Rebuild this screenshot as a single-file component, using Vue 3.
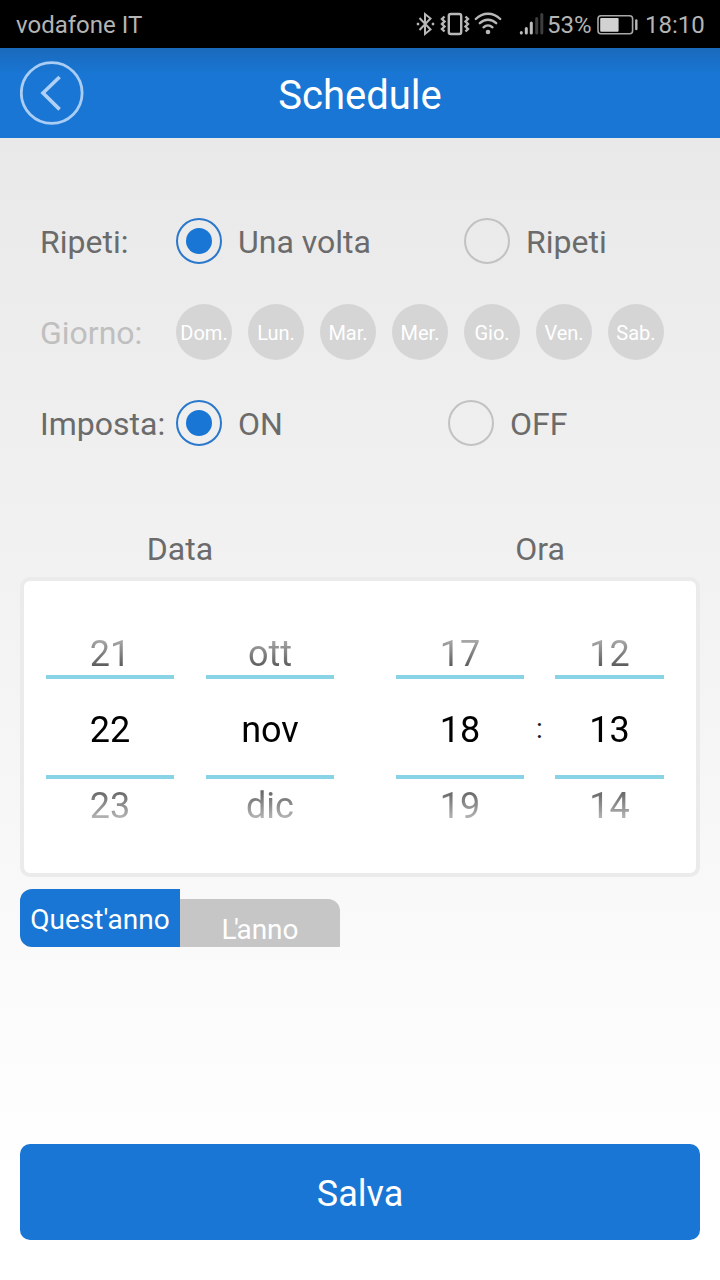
<script setup>
import { ref } from 'vue';

const repeat = ref('once');
const power = ref('on');
const year = ref('this');

const days = ['Dom.', 'Lun.', 'Mar.', 'Mer.', 'Gio.', 'Ven.', 'Sab.'];

const dateWheels = [
	{ name: 'day', items: ['21', '22', '23'] },
	{ name: 'month', items: ['ott', 'nov', 'dic'] },
];

const timeWheels = [
	{ name: 'hour', items: ['17', '18', '19'] },
	{ name: 'minute', items: ['12', '13', '14'] },
];
</script>

<template>
	<div class="screen">
		<div class="status-bar">
			<span class="carrier">vodafone IT</span>
			<svg class="status-icons" width="131" height="48" viewBox="0 0 131 48" fill="none" stroke="#b8b8b8">
				<!-- bluetooth -->
				<path d="M3.5 18 L14.5 29.5 L9 34 V14 L14.5 18.5 L3.5 30" stroke-width="2" />
				<path d="M0.8 24 h2.4 M15.8 24 h2.4" stroke-width="2.4" />
				<!-- vibrate -->
				<rect x="32.8" y="14" width="12.4" height="20" rx="2" stroke-width="2.4" />
				<path d="M28.5 16.5 l-2.5 2.5 2.5 2.5 -2.5 2.5 2.5 2.5 -2.5 2.5 2.5 2.5 M49.5 16.5 l2.5 2.5 -2.5 2.5 2.5 2.5 -2.5 2.5 2.5 2.5 -2.5 2.5" stroke-width="2.4" />
				<!-- wifi -->
				<path d="M59.8 19 C66.8 12 77.2 12 84.2 19 M63.8 23.2 C68.5 18.6 75.5 18.6 80.2 23.2 M67.5 27.3 C70.2 24.8 73.8 24.8 76.5 27.3" stroke-width="2.4" stroke-linecap="round" />
				<circle cx="72" cy="32" r="2.3" fill="#b8b8b8" stroke="none" />
				<!-- signal -->
				<g stroke-width="3" stroke-linecap="round">
					<path d="M105.3 32.5 v.5 M110.3 28.5 V33 M115.3 23 V33" stroke="#bdbdbd" />
					<path d="M120.7 18.5 V33 M125.8 14.5 V33" stroke="#3d3d3d" />
				</g>
			</svg>
			<span class="percent">53%</span>
			<svg class="battery" width="42" height="48" viewBox="0 0 42 48" fill="none">
				<rect x="1" y="15.8" width="34.6" height="18" rx="3" stroke="#a8a8a8" stroke-width="1.6" />
				<rect x="3.2" y="18" width="18.4" height="13.8" rx="1" fill="#d2d2d2" />
				<path d="M39.3 20.5 V29" stroke="#b8b8b8" stroke-width="2.4" stroke-linecap="round" />
			</svg>
			<span class="clock">18:10</span>
		</div>

		<header class="title-bar">
			<button class="back" aria-label="Indietro">
				<svg width="64" height="64" viewBox="0 0 64 64" fill="none">
					<circle cx="31.7" cy="32" r="30.4" stroke="#a9cdf4" stroke-width="2.8" />
					<path d="M39.6 16 L23 32 L39.6 48.4" stroke="#b0d1f5" stroke-width="3.6" />
				</svg>
			</button>
			<h1>Schedule</h1>
		</header>

		<main class="content">
			<div class="row repeat-row">
				<span class="label">Ripeti:</span>
				<button class="option" @click="repeat = 'once'">
					<i class="radio" :class="{ checked: repeat === 'once' }"></i>
					<span>Una volta</span>
				</button>
				<button class="option" @click="repeat = 'weekly'">
					<i class="radio" :class="{ checked: repeat === 'weekly' }"></i>
					<span>Ripeti</span>
				</button>
			</div>

			<div class="row day-row">
				<span class="label muted">Giorno:</span>
				<div class="days">
					<span v-for="day in days" :key="day" class="day">{{ day }}</span>
				</div>
			</div>

			<div class="row power-row">
				<span class="label">Imposta:</span>
				<button class="option" @click="power = 'on'">
					<i class="radio" :class="{ checked: power === 'on' }"></i>
					<span>ON</span>
				</button>
				<button class="option" @click="power = 'off'">
					<i class="radio" :class="{ checked: power === 'off' }"></i>
					<span>OFF</span>
				</button>
			</div>

			<div class="headings">
				<span>Data</span>
				<span>Ora</span>
			</div>

			<div class="picker">
				<div class="group date">
					<div v-for="wheel in dateWheels" :key="wheel.name" class="wheel">
						<div class="items">
							<span v-for="item in wheel.items" :key="item">{{ item }}</span>
						</div>
						<div class="frame"></div>
					</div>
				</div>
				<div class="group time">
					<template v-for="(wheel, index) in timeWheels" :key="wheel.name">
						<span v-if="index > 0" class="colon">:</span>
						<div class="wheel" :class="wheel.name">
							<div class="items">
								<span v-for="item in wheel.items" :key="item">{{ item }}</span>
							</div>
							<div class="frame"></div>
						</div>
					</template>
				</div>
			</div>

			<div class="years">
				<button class="year" :class="{ active: year === 'this' }" @click="year = 'this'">Quest'anno</button>
				<button class="year" :class="{ active: year === 'next' }" @click="year = 'next'">L'anno</button>
			</div>

			<button class="save">Salva</button>
		</main>
	</div>
</template>

<style>
body {
	margin: 0;
}
</style>

<style scoped>
.screen {
	display: flex;
	flex-direction: column;
	width: 720px;
	height: 1280px;
	overflow: hidden;
	font-family: Roboto, sans-serif;
	color: #6b6b6b;
	background: linear-gradient(#e9e9e9 138px, #f1f1f1 540px, #f9f9f9 900px, #fff 1200px);
}

button {
	padding: 0;
	border: 0;
	background: none;
	font: inherit;
	color: inherit;
	white-space: nowrap;
}

svg {
	display: block;
}

.status-bar {
	display: flex;
	flex: none;
	align-items: center;
	height: 48px;
	padding: 0 16px;
	box-sizing: border-box;
	background: #000;
	color: #b4b4b4;
	font-size: 24px;
	line-height: 48px;
}

.status-bar span {
	padding-top: 2px;
}

.status-icons {
	margin-left: auto;
}

.percent {
	width: 50px;
	box-sizing: border-box;
}

.battery {
	margin-right: 6px;
}

.clock {
	width: 59px;
}

.title-bar {
	display: grid;
	flex: none;
	grid-template-columns: 64px 1fr 64px;
	align-items: center;
	height: 90px;
	padding: 0 20px;
	box-sizing: border-box;
	background: linear-gradient(#1a69bb, #1976d4 26px);
}

.title-bar h1 {
	margin: 6px 0 0;
	color: #fff;
	font-size: 40px;
	font-weight: 400;
	line-height: 48px;
	text-align: center;
}

.content {
	display: flex;
	flex: 1;
	flex-direction: column;
	padding: 80px 20px 40px;
}

.row {
	display: flex;
	align-items: center;
	padding-left: 20px;
	font-size: 32px;
	line-height: 44px;
}

.row .label {
	flex: none;
	width: 136px;
	padding-top: 2px;
}

.label.muted {
	color: #bfbfbf;
}

.repeat-row,
.power-row {
	height: 46px;
}

.option {
	display: flex;
	flex: none;
	align-items: center;
	gap: 16px;
	width: 288px;
}

.option:last-child {
	width: auto;
}

.option span {
	padding-top: 2px;
}

.power-row .option:not(:last-child) {
	width: 272px;
}

.radio {
	display: flex;
	align-items: center;
	justify-content: center;
	width: 46px;
	height: 46px;
	box-sizing: border-box;
	border: 2px solid #c2c2c2;
	border-radius: 50%;
}

.radio.checked {
	border-color: #2a78cc;
}

.radio.checked::after {
	content: '';
	width: 26px;
	height: 26px;
	border-radius: 50%;
	background: #1976d4;
}

.day-row {
	height: 56px;
	margin: 40px 0;
}

.days {
	display: flex;
	gap: 16px;
}

.day {
	width: 56px;
	height: 56px;
	border-radius: 50%;
	background: #d5d5d5;
	color: #fff;
	font-size: 20px;
	line-height: 58px;
	text-align: center;
}

.headings {
	display: grid;
	grid-template-columns: 320px 1fr;
	margin-top: 80px;
	height: 51px;
	font-size: 32px;
	line-height: 46px;
	text-align: center;
}

.headings span:last-child {
	padding-left: 40px;
}

.picker {
	display: flex;
	justify-content: space-between;
	height: 300px;
	padding: 0 32px 0 22px;
	box-sizing: border-box;
	border: 4px solid #ebebeb;
	border-radius: 10px;
	background: #fff;
}

.group {
	display: flex;
	align-items: center;
}

.date {
	gap: 32px;
}

.wheel {
	display: grid;
	width: 128px;
}

.wheel.minute {
	width: 109px;
}

.items,
.frame {
	grid-area: 1 / 1;
}

.items {
	display: flex;
	flex-direction: column;
	padding-top: 6px;
	color: #000;
	font-size: 36px;
	line-height: 76px;
	text-align: center;
	mask-image: linear-gradient(transparent, #000 88px, #000 146px, transparent 234px);
}

.frame {
	align-self: center;
	height: 104px;
	box-sizing: border-box;
	border: solid #88d3e6;
	border-width: 4px 0;
}

.colon {
	width: 31px;
	padding-top: 2px;
	color: #222;
	font-size: 28px;
	text-align: center;
}

.years {
	display: flex;
	align-items: flex-start;
	height: 58px;
	margin-top: 12px;
	overflow: hidden;
}

.year {
	width: 160px;
	height: 58px;
	margin-top: 10px;
	border-radius: 12px 0 0 12px;
	background: #c6c6c6;
	color: #fff;
	font-size: 28px;
	line-height: 58px;
}

.year:last-child {
	border-radius: 0 12px 12px 0;
}

/* pulls the apostrophe in under the L */
.year:last-child::first-letter {
	letter-spacing: -2.5px;
}

.year.active {
	margin-top: 0;
	padding-top: 2px;
	background: #1976d4;
}

.year:not(.active) {
	padding-top: 2px;
}

.save {
	height: 96px;
	margin-top: auto;
	padding-top: 2px;
	border-radius: 10px;
	background: #1976d4;
	color: #fff;
	font-size: 36px;
	line-height: 96px;
}
</style>
